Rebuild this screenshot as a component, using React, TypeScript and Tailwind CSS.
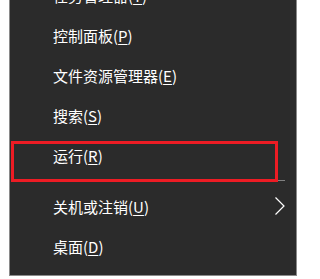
import React from 'react';

interface MenuItem {
    label: string;
    hotkey: string;
    submenu?: boolean;
}

const topItems: MenuItem[] = [
    { label: '任务管理器', hotkey: 'T' },
    { label: '控制面板', hotkey: 'P' },
    { label: '文件资源管理器', hotkey: 'E' },
    { label: '搜索', hotkey: 'S' },
    { label: '运行', hotkey: 'R' },
];

const bottomItems: MenuItem[] = [
    { label: '关机或注销', hotkey: 'U', submenu: true },
    { label: '桌面', hotkey: 'D' },
];

const Row: React.FC<{ item: MenuItem }> = ({ item }) => (
    <div className="h-[40px] flex items-center justify-between pl-[43px] pr-[11px]">
        <span className="text-[15px] leading-none text-white">
            {item.label}(<span className="underline underline-offset-[2px]">{item.hotkey}</span>)
        </span>
        {item.submenu && (
            <svg width="10" height="18" viewBox="0 0 10 18" fill="none" stroke="#ffffff" strokeWidth="1.2">
                <polyline points="0.5,0.5 9,9 0.5,17.5" />
            </svg>
        )}
    </div>
);

export default function App() {
    return (
        <div
            className="relative w-[299px] h-[279px] overflow-hidden bg-white"
            style={{ fontFamily: '"Noto Sans CJK SC", "Noto Sans", sans-serif' }}
        >
            <div className="ml-[9px] -mt-[26px] w-[288px] border border-[#8a8a8a] bg-[#2b2b2b] pb-[9px]">
                {topItems.map((item) => (
                    <Row key={item.hotkey} item={item} />
                ))}
                {/* separator */}
                <div className="h-[11px] flex items-center pl-[10px] pr-[11px]">
                    <div className="h-px w-full bg-[#808080]" />
                </div>
                {bottomItems.map((item) => (
                    <Row key={item.hotkey} item={item} />
                ))}
            </div>

            {/* red highlight box */}
            <div className="absolute left-[11px] top-[141px] w-[267px] h-[41px] border-[3px] border-[#ed1c24]" />
        </div>
    );
}
